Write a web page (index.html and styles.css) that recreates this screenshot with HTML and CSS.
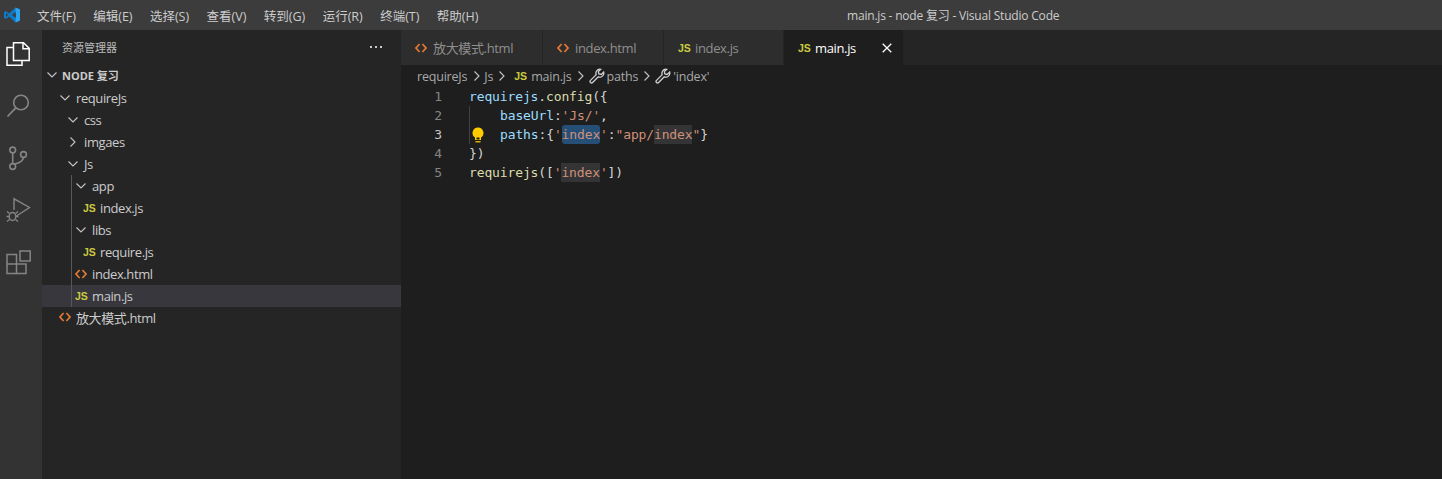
FILE: index.html
```html
<!DOCTYPE html>
<html lang="zh-CN">
<head>
  <meta charset="UTF-8" />
  <meta name="viewport" content="width=device-width, initial-scale=1.0"/>
  <title>main.js - node 复习 - Visual Studio Code</title>
  <link rel="stylesheet" href="styles.css">
</head>
<body>
  <svg class="sprites" width="0" height="0">
    <symbol id="chev-down" viewBox="0 0 10 10"><path d="M0.5 2.500 5 7l4.500-4.500" fill="none" stroke="currentColor" stroke-width="1.100"/></symbol>
    <symbol id="chev-right" viewBox="0 0 10 10"><path d="M2.500 0.500 7 5l-4.500 4.500" fill="none" stroke="currentColor" stroke-width="1.100"/></symbol>
    <symbol id="html" viewBox="0 0 12 10"><path d="M4.600 1 1 5l3.600 4M7.400 1 11 5 7.400 9" fill="none" stroke="#e37933" stroke-width="1.700"/></symbol>
    <symbol id="wrench" viewBox="0 0 16 16"><path d="M10.800 1.200a4 4 0 0 0-3.600 5.500L1.500 12.400a1.400 1.400 0 0 0 2.100 2.100l5.700-5.700a4 4 0 0 0 5.400-4.700l-2.500 2.400-2.300-.6-.6-2.300 2.400-2.300a4 4 0 0 0-.9-.1z" fill="none" stroke="#d0d0d0" stroke-width="1.300"/></symbol>
  </svg>

  <!-- Title bar -->
  <header class="titlebar">
    <svg class="vsc-logo" viewBox="0 0 16 16" width="16" height="16">
      <path d="M11.600 0.600 16 2.600v10.800l-4.400 2L5 9.600 2 12 0 11V5l2-1 3 2.400z" fill="#0e79c4"/>
      <path d="M11.600 0.600 16 2.600v10.800l-4.400 2z" fill="#2aa4ef"/>
      <path d="M11.800 5 8 8l3.800 3z" fill="#3c3c3c"/>
      <path d="M2 6v4l2-2z" fill="#3c3c3c"/>
    </svg>
    <nav class="menu">
      <span>文件(F)</span>
      <span>编辑(E)</span>
      <span>选择(S)</span>
      <span>查看(V)</span>
      <span>转到(G)</span>
      <span>运行(R)</span>
      <span>终端(T)</span>
      <span>帮助(H)</span>
    </nav>
    <div class="window-title">main.js - node 复习 - Visual Studio Code</div>
  </header>

  <div class="workbench">
    <!-- Activity bar -->
    <aside class="activity">
      <svg class="act-icon" viewBox="0 0 24 24"><g fill="none" stroke="#fff" stroke-width="1.500"><path d="M7.500 .8h10l5.700 5.500v12.200H7.500z"/><path d="M17 .8v6h6"/><path d="M7.500 5.500H1V23.200h15v-4.700"/></g></svg>
      <svg class="act-icon" viewBox="0 0 24 24"><circle cx="15" cy="8.500" r="7.300" fill="none" stroke="#858585" stroke-width="1.600"/><path d="M9.800 13.800 1.500 22.500" stroke="#858585" stroke-width="1.800"/></svg>
      <svg class="act-icon" viewBox="0 0 24 24"><g fill="none" stroke="#858585" stroke-width="1.600"><circle cx="6.700" cy="4" r="2.900"/><circle cx="6.700" cy="20.500" r="2.900"/><circle cx="17.500" cy="8.500" r="2.900"/><path d="M6.700 7v10.500M8.500 18c5-1 8.500-2.500 9-6.600"/></g></svg>
      <svg class="act-icon" viewBox="0 0 24 24"><g fill="none" stroke="#858585" stroke-width="1.400"><path d="M8 12V.8L23.500 9.500 10.500 18"/><ellipse cx="6.500" cy="18.500" rx="3.300" ry="4"/><path d="M1 13.500l2.500 2M12 13.500l-2.500 2M.5 18.500h2.700M10 18.500h2.500M1 23.500l2.500-2M12 23.500l-2.500-2"/></g></svg>
      <svg class="act-icon" viewBox="0 0 24 24"><g fill="none" stroke="#858585" stroke-width="1.500"><path d="M1 4.500h9.500v19H1zM1 14h19v9.500h-9.500"/><path d="M14 1h10.200v10H14z"/></g></svg>
    </aside>

    <!-- Sidebar -->
    <aside class="sidebar">
      <div class="side-head">
        <span>资源管理器</span>
        <span class="dots"><i></i><i></i><i></i></span>
      </div>
      <div class="tree">
        <div class="guide"></div>
        <div class="row root lv0 cjk"><svg class="chev"><use href="#chev-down"/></svg>NODE 复习</div>
        <div class="row lv1"><svg class="chev"><use href="#chev-down"/></svg>requireJs</div>
        <div class="row lv2"><svg class="chev"><use href="#chev-down"/></svg>css</div>
        <div class="row lv2"><svg class="chev"><use href="#chev-right"/></svg>imgaes</div>
        <div class="row lv2"><svg class="chev"><use href="#chev-down"/></svg>Js</div>
        <div class="row lv3"><svg class="chev"><use href="#chev-down"/></svg>app</div>
        <div class="row lv4"><span class="js">JS</span>index.js</div>
        <div class="row lv3"><svg class="chev"><use href="#chev-down"/></svg>libs</div>
        <div class="row lv4"><span class="js">JS</span>require.js</div>
        <div class="row lv3b"><svg class="file-ic"><use href="#html"/></svg>index.html</div>
        <div class="row lv3b selected"><span class="js">JS</span>main.js</div>
        <div class="row lv1b cjk"><svg class="file-ic"><use href="#html"/></svg>放大模式.html</div>
      </div>
    </aside>

    <!-- Editor -->
    <main class="editor">
      <div class="tabs">
        <div class="tab tab-wide"><svg class="file-ic"><use href="#html"/></svg>放大模式.html</div>
        <div class="tab tab-mid"><svg class="file-ic"><use href="#html"/></svg>index.html</div>
        <div class="tab"><span class="js">JS</span>index.js</div>
        <div class="tab active"><span class="js">JS</span>main.js<svg class="close" viewBox="0 0 10 10"><path d="M.7.700l8.600 8.600M9.300.700.7 9.300" stroke="#fff" stroke-width="1.300"/></svg></div>
      </div>
      <div class="crumbs">
        <span class="first">requireJs</span><svg class="sep"><use href="#chev-right"/></svg>
        <span>Js</span><svg class="sep"><use href="#chev-right"/></svg>
        <span class="js">JS</span><span>main.js</span><svg class="sep"><use href="#chev-right"/></svg>
        <svg class="wrench"><use href="#wrench"/></svg><span>paths</span><svg class="sep"><use href="#chev-right"/></svg>
        <svg class="wrench"><use href="#wrench"/></svg><span>'index'</span>
      </div>
      <div class="code">
        <div class="line"><span class="num">1</span><code><b class="fn">requirejs</b>.<b class="yl">config</b>({</code></div>
        <div class="line"><span class="num">2</span><code class="in"><b class="fn">baseUrl</b>:<b class="st">'Js/'</b>,</code></div>
        <div class="line current"><span class="num">3</span>
          <svg class="bulb" viewBox="0 0 12 16"><path d="M6 .5a5.500 5.500 0 0 0-3 10.100V13h6v-2.400A5.500 5.500 0 0 0 6 .5z" fill="#ffcc00"/><path d="M4.500 10.500h3v2h-3z" fill="#1e1e1e"/><path d="M3.500 14h5v1.500h-5z" fill="#ddb000"/></svg>
          <code class="in"><b class="fn">paths</b>:{<b class="st">'<mark class="sel">index</mark>'</b>:<b class="st">"app/<mark>index</mark>"</b>}</code></div>
        <div class="line"><span class="num">4</span><code>})</code></div>
        <div class="line"><span class="num">5</span><code><b class="yl">requirejs</b>([<b class="st">'<mark>index</mark>'</b>])</code></div>
        <div class="indent-line"></div>
      </div>
    </main>
  </div>
</body>
</html>
```

FILE: styles.css
```css
* {
  box-sizing: border-box;
}

html, body {
  height: 100%;
}

body {
  margin: 0;
  background-color: #1e1e1e;
  color: #cccccc;
  font-family: 'Open Sans', 'Noto Sans CJK SC', sans-serif;
  font-size: 13px;
  overflow: hidden;
}

.sprites {
  position: absolute;
}

/* Title bar */
.titlebar {
  display: flex;
  align-items: center;
  height: 30px;
  background-color: #3c3c3c;
  font-size: 12px;
}

.vsc-logo {
  margin-left: 4px;
  flex: none;
}

.menu {
  display: flex;
  gap: 17.400px;
  margin-left: 17px;
  font-size: 12.500px;
  color: #cccccc;
}

.window-title {
  flex: 1;
  text-align: center;
  padding-right: 14px;
  letter-spacing: -0.2px;
  color: #cccccc;
}

.workbench {
  display: flex;
  height: 449px;
}

/* Activity bar */
.activity {
  width: 42px;
  flex: none;
  background-color: #333333;
  display: flex;
  flex-direction: column;
  padding: 12px 0 0 6px;
  gap: 28px;
}

.act-icon {
  width: 24px;
  height: 24px;
  display: block;
  overflow: visible;
}

/* Sidebar */
.sidebar {
  width: 359px;
  flex: none;
  background-color: #252526;
}

.side-head {
  display: flex;
  align-items: center;
  justify-content: space-between;
  height: 35px;
  padding: 0 19px 2px 20px;
  font-size: 11px;
  color: #bbbbbb;
}

.dots {
  display: flex;
  gap: 3px;
}

.dots i {
  width: 2px;
  height: 2px;
  background-color: #cccccc;
}

.tree {
  position: relative;
}

.guide {
  position: absolute;
  left: 29px;
  top: 110px;
  width: 1px;
  height: 132px;
  background-color: #585858;
}

.row {
  display: flex;
  align-items: center;
  height: 22px;
  font-size: 13px;
  letter-spacing: -0.4px;
  color: #cccccc;
}

.row.root {
  font-weight: 700;
  font-size: 11px;
  letter-spacing: 0;
}

.row.cjk {
  padding-bottom: 2px;
}

.row.selected {
  background-color: #37373d;
}

.chev {
  width: 10px;
  height: 10px;
  flex: none;
  color: #c5c5c5;
  margin-right: 6px;
}

.root .chev {
  margin-right: 5px;
}

.lv0 { padding-left: 5px; }
.lv1 { padding-left: 18px; }
.lv2 { padding-left: 26px; }
.lv3 { padding-left: 34px; }
.lv4 { padding-left: 41px; }
.lv3b { padding-left: 33px; }
.lv1b { padding-left: 17px; }

.js {
  color: #cbcb41;
  font-family: 'Liberation Sans', sans-serif;
  font-weight: 700;
  font-size: 10.500px;
  width: 17px;
  flex: none;
  letter-spacing: 0;
}

.file-ic {
  width: 12px;
  height: 10px;
  flex: none;
  margin-right: 5px;
}

/* Editor */
.editor {
  flex: 1;
  min-width: 0;
}

.tabs {
  display: flex;
  height: 35px;
  background-color: #252526;
  gap: 1px;
}

.tab {
  display: flex;
  align-items: center;
  width: 119px;
  padding-left: 14px;
  background-color: #2d2d2d;
  color: #8f8f8f;
  font-size: 13px;
  letter-spacing: -0.35px;
}

.tab-wide {
  width: 141px;
}

.tab-mid {
  width: 120px;
}

.tab .file-ic {
  margin-right: 6px;
}

.tab.active {
  background-color: #1e1e1e;
  color: #ffffff;
}

.close {
  width: 10px;
  height: 10px;
  margin-left: 26px;
}

.crumbs {
  display: flex;
  align-items: center;
  height: 22px;
  padding-left: 16px;
  color: #a9a9a9;
  font-size: 12.500px;
  letter-spacing: -0.2px;
}

.crumbs .first {
  margin-right: 1px;
}

.crumbs .js {
  margin-left: 5px;
}

.sep {
  width: 10px;
  height: 10px;
  margin: 0 2px 0 4px;
  color: #c5c5c5;
}

.wrench {
  width: 16px;
  height: 16px;
  margin-right: 2px;
  margin-left: 1px;
}

.code {
  position: relative;
  font-family: 'DejaVu Sans Mono', monospace;
  font-size: 13px;
  letter-spacing: -0.13px;
}

.line {
  position: relative;
  display: flex;
  align-items: center;
  height: 19px;
  color: #d4d4d4;
}

.num {
  width: 41px;
  text-align: right;
  color: #858585;
  flex: none;
  margin-right: 27px;
}

.current .num {
  color: #c6c6c6;
}

code {
  font-family: inherit;
}

code b {
  font-weight: 400;
}

.in {
  padding-left: 31px;
}

.fn { color: #9cdcfe; }
.yl { color: #dcdcaa; }
.st { color: #ce9178; }

mark {
  color: inherit;
  background-color: #343437;
  padding: 2px 0;
}

mark.sel {
  background-color: #264f78;
  border-radius: 3px;
}

.bulb {
  position: absolute;
  left: 71px;
  top: 2px;
  width: 12px;
  height: 16px;
}

.indent-line {
  position: absolute;
  left: 68px;
  top: 19px;
  width: 1px;
  height: 38px;
  background-color: #404040;
}
```
